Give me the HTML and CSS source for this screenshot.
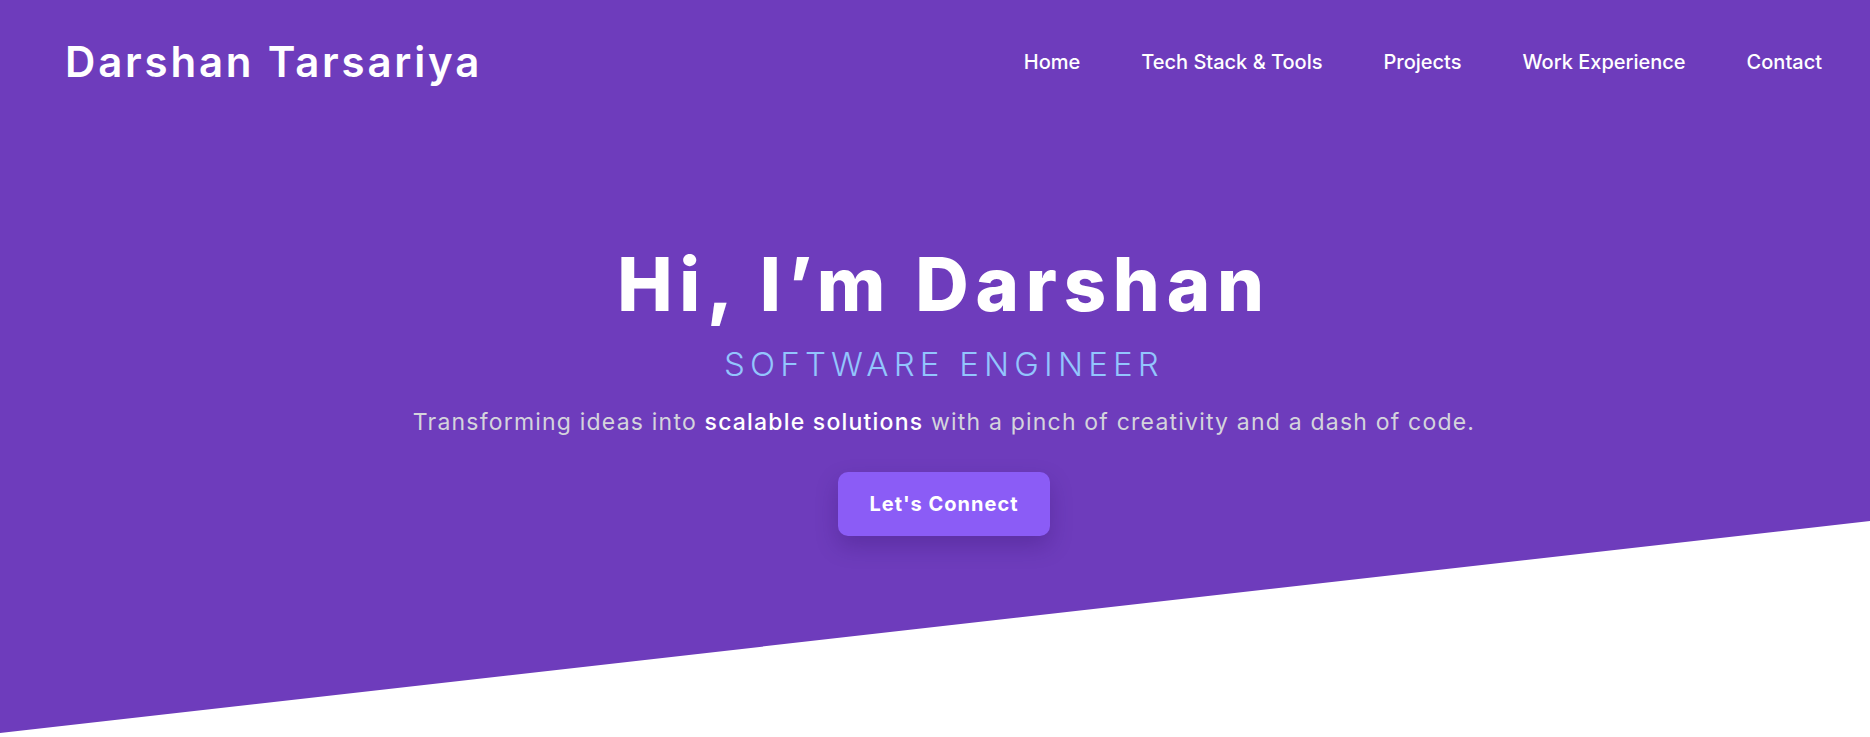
FILE: index.html
```html
<!DOCTYPE html>
<html lang="en">
<head>
<meta charset="utf-8">
<title>Darshan Tarsariya</title>
<link rel="stylesheet" href="styles.css">
</head>
<body>
<section class="hero">
  <header class="site-header">
    <a class="logo" href="#">Darshan Tarsariya</a>
    <nav class="nav">
      <a href="#">Home</a>
      <a href="#">Tech Stack &amp; Tools</a>
      <a href="#">Projects</a>
      <a href="#">Work Experience</a>
      <a href="#">Contact</a>
    </nav>
  </header>
  <div class="hero-content">
    <h1 class="hero-title">Hi, I’m Darshan</h1>
    <p class="hero-role">SOFTWARE ENGINEER</p>
    <p class="hero-tagline">Transforming ideas into <strong>scalable solutions</strong> with a pinch of creativity and a dash of code.</p>
    <a class="cta" href="#">Let's Connect</a>
  </div>
</section>
</body>
</html>
```

FILE: styles.css
```css
* { box-sizing: border-box; }
html, body { margin: 0; padding: 0; background: #ffffff; }
body { font-family: Inter, "Open Sans", sans-serif; color: #fff; }
a { color: inherit; text-decoration: none; }

.hero {
  height: 737px;
  background: #6e3cbc;
  clip-path: polygon(0 0, 100% 0, 100% 521px, 0 733px);
}

.site-header {
  height: 124px;
  display: flex;
  align-items: center;
  justify-content: space-between;
  padding: 0 48px 0 65px;
}
.logo {
  font-size: 42px;
  font-weight: 600;
  letter-spacing: 2.8px;
  line-height: 1;
}
.nav {
  display: flex;
  gap: 61px;
}
.nav a {
  font-size: 20px;
  font-weight: 500;
  line-height: 1;
}

.hero-content {
  display: flex;
  flex-direction: column;
  align-items: center;
  text-align: center;
  padding-left: 18px;
}
.hero-title {
  margin: 120px 0 0;
  font-size: 74px;
  font-weight: 800;
  line-height: 1.1;
  letter-spacing: 6.8px;
}
.hero-role {
  margin: 20px 0 0;
  font-size: 33px;
  font-weight: 300;
  line-height: 1.2;
  letter-spacing: 5.2px;
  color: #93c5fd;
}
.hero-tagline {
  margin: 21px 0 0;
  font-size: 23px;
  font-weight: 400;
  line-height: 1.45;
  letter-spacing: 1.2px;
  color: #d4d4dc;
}
.hero-tagline strong {
  font-weight: 500;
  color: #ffffff;
}
.cta {
  margin-top: 33px;
  height: 64px;
  line-height: 64px;
  padding: 0 31px;
  border-radius: 10px;
  background: #8b5cf6;
  font-size: 20px;
  font-weight: 700;
  letter-spacing: 1px;
  box-shadow: 0 10px 22px rgba(40, 10, 90, 0.25);
}
```
